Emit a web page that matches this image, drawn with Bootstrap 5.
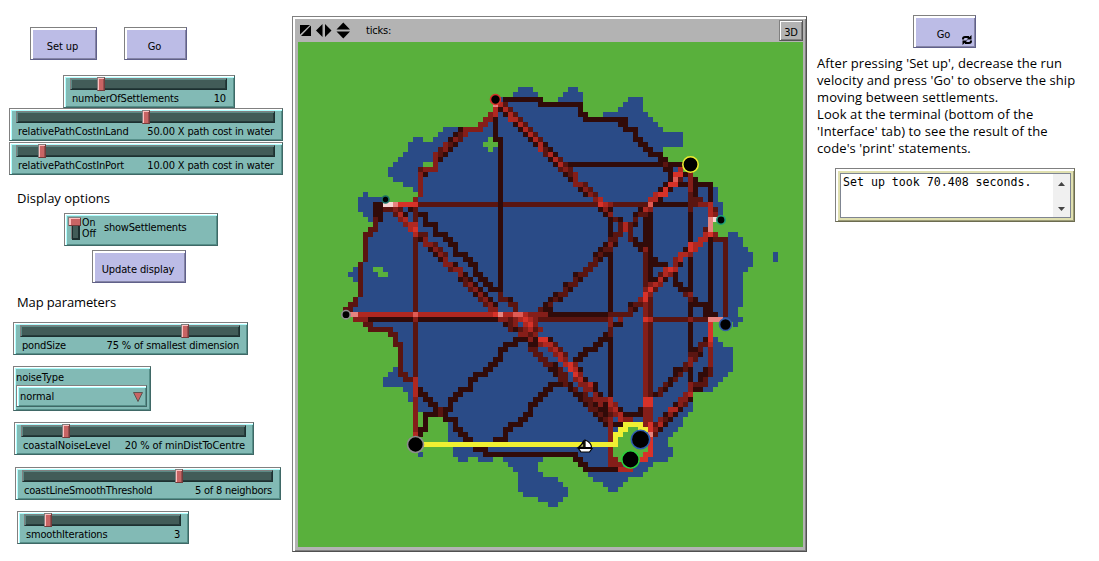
<!DOCTYPE html>
<html lang="en">
<head>
<meta charset="utf-8">
<title>Ship routes between settlements</title>
<link href="https://cdn.jsdelivr.net/npm/bootstrap@5.3.0/dist/css/bootstrap.min.css" rel="stylesheet">
<style>
body{width:1099px;height:561px;overflow:hidden;background:#fff;color:#000;font:11px/13px "DejaVu Sans Condensed","DejaVu Sans",sans-serif;font-stretch:condensed}
.left-pane{width:292px;padding-top:27px}
.right-pane{width:292px;padding:15px 0 0 10px}
.nl-btn,.nl-box{border:1px solid;border-color:#808080 #60608a #60608a #808080;height:33px}
.nl-btn{background:#bcbce6;border-radius:0;padding:5px 2px 0 0;font:inherit;color:#000;letter-spacing:-.1px;box-shadow:inset 2px 2px #fff,inset -1px -1px #8585a6}
.nl-box{background:#82bab5;border-color:#808080 #3f6866 #3f6866 #808080;box-shadow:inset 1px 1px #fff,inset 2px 2px #b0ffff,inset -1px -1px #568f89}
.nl-slider{padding:2px 7px 0 6px}
.groove{height:12px;background:#425c58;border:1px solid;border-color:#808080 #1d3030 #1d3030 #808080;box-shadow:inset 1px 1px #5c8a85,inset -1px -1px #263c3b}
.thumb{top:-2px;width:8px;height:14px;background:#c86464;border:1px solid;border-color:#808080 #733b3b #733b3b #808080;box-shadow:inset 1px 1px #ffc0bf,inset -1px 0 #945050}
.nl-caption{padding:2px 1px 0 2px;letter-spacing:-.17px;white-space:nowrap}
.run-row{padding-left:30px;gap:27px}
.w-setup{width:67px}
.w-go{width:63px}
.w-forever{width:63px;margin-left:96px}
.w-update{width:94px;margin:4px 0 0 92px}
.s-count{width:172px;margin:15px 0 0 63px}
.s-land{width:274px;margin-left:9px}
.s-port{width:274px;margin:1px 0 0 9px}
.s-pond{width:235px;margin:11px 0 0 13px}
.s-coastal{width:240px;margin:11px 0 0 14px}
.s-coastal .nl-caption{letter-spacing:-.09px}
.s-smooth{width:266px;margin:12px 0 0 15px}
.s-smooth .nl-caption{letter-spacing:-.24px}
.s-iter{width:172px;margin:11px 0 0 17px}
.switch-box{width:154px;margin:6px 0 0 64px;padding:3px 0 0 3px}
.on-off{line-height:11px;font-size:10.500px}
.switch-name{margin:4px 0 0 8px;letter-spacing:-.2px}
.chooser{width:138px;height:45px;margin:11px 0 0 13px;padding:4px 3px 3px 2px;letter-spacing:-.1px}
.chooser-value{height:22px;margin-top:1px;padding:1px 3px 0 3px}
.note{font:13px/17px "Open Sans","Noto Sans",sans-serif;white-space:nowrap;margin-left:17px}
.n-display{margin-top:15px}
.n-map{margin-top:11px;letter-spacing:-.12px}
.n-help{margin:7px 0 0;letter-spacing:.09px}
.world{width:515px;height:536px;margin-top:16px;border:1px solid #808080;border-right-color:#505050;border-bottom-color:#505050;background:#b3b3b3;padding:2px 3px 3px 5px;box-shadow:inset 2px 2px #fff,inset -1px -1px #808080}
.world-bar{height:23px}
.ticks{margin:5px 0 0 16px;letter-spacing:-.2px}
.btn-3d{width:24px;height:21px;padding-top:5px;border:1px solid;border-color:#808080 #555 #555 #808080;background:#b3b3b3;box-shadow:inset 1px 1px #fff,inset -1px -1px #808080;margin-top:1px;letter-spacing:-.2px}
.output{width:240px;height:54px;margin:11px 0 0 18px;border:1px solid;border-color:#808080 #6c6c50 #6c6c50 #808080;background:#e0e0b0;padding:4px 3px 3px 4px;box-shadow:inset 2px 2px #fff,inset -1px -1px #9c9c78}
.output-text{background:#fff;border:1px solid #7f8591;height:45px;font:11.600px/14px "DejaVu Sans Mono",monospace;padding:1px 0 0 2px}
.scroller{width:17px;background:#f0f0f0;margin-top:-1px;padding:8px 0 5px}
.forever{right:3px;bottom:2px}
</style>
</head>
<body>
<main class="d-flex">
<section class="left-pane flex-shrink-0">
  <div class="run-row d-flex">
    <button class="nl-btn w-setup">Set up</button>
    <button class="nl-btn w-go">Go</button>
  </div>
  <div class="nl-box nl-slider s-count"><div class="groove position-relative"><div class="thumb position-absolute" style="left:26px"></div></div><div class="nl-caption d-flex justify-content-between"><span>numberOfSettlements</span><span>10</span></div></div>
  <div class="nl-box nl-slider s-land"><div class="groove position-relative"><div class="thumb position-absolute" style="left:125px"></div></div><div class="nl-caption d-flex justify-content-between"><span>relativePathCostInLand</span><span>50.00 X path cost in water</span></div></div>
  <div class="nl-box nl-slider s-port"><div class="groove position-relative"><div class="thumb position-absolute" style="left:21px"></div></div><div class="nl-caption d-flex justify-content-between"><span>relativePathCostInPort</span><span>10.00 X path cost in water</span></div></div>
  <div class="note n-display">Display options</div>
  <div class="nl-box switch-box d-flex">
    <svg width="14" height="24" viewBox="0 0 14 24" shape-rendering="crispEdges"><path fill="#808080" d="M3 8h8v14H3z"/><path fill="#1d3030" d="M4 8h8v15H4z"/><path fill="#425c58" d="M5 8h5v13H5z"/><path fill="#808080" d="M0 0h13v9H0z"/><path fill="#733b3b" d="M1 1h12v8H1z"/><path fill="#ffc0bf" d="M1 1h11v7H1z"/><path fill="#c86464" d="M3 2h9v6H3z"/></svg>
    <div class="on-off"><div>On</div><div>Off</div></div><div class="switch-name">showSettlements</div>
  </div>
  <button class="nl-btn w-update d-block">Update display</button>
  <div class="note n-map">Map parameters</div>
  <div class="nl-box nl-slider s-pond"><div class="groove position-relative"><div class="thumb position-absolute" style="left:160px"></div></div><div class="nl-caption d-flex justify-content-between"><span>pondSize</span><span>75 % of smallest dimension</span></div></div>
  <div class="nl-box chooser">
    <div>noiseType</div>
    <div class="nl-box chooser-value d-flex justify-content-between align-items-center"><span>normal</span><svg width="10" height="10"><path d="M.5 .5h9l-4.500 9z" fill="#c86464" stroke="#5d5450"/></svg></div>
  </div>
  <div class="nl-box nl-slider s-coastal"><div class="groove position-relative"><div class="thumb position-absolute" style="left:40px"></div></div><div class="nl-caption d-flex justify-content-between"><span>coastalNoiseLevel</span><span>20 % of minDistToCentre</span></div></div>
  <div class="nl-box nl-slider s-smooth"><div class="groove position-relative"><div class="thumb position-absolute" style="left:152px"></div></div><div class="nl-caption d-flex justify-content-between"><span>coastLineSmoothThreshold</span><span>5 of 8 neighbors</span></div></div>
  <div class="nl-box nl-slider s-iter"><div class="groove position-relative"><div class="thumb position-absolute" style="left:19px"></div></div><div class="nl-caption d-flex justify-content-between"><span>smoothIterations</span><span>3</span></div></div>
</section>

<section class="world flex-shrink-0">
  <div class="world-bar d-flex">
    <svg width="52" height="23"><path d="M2 6h10l-10 9.500zM13 6.500v10.500H3zM24.500 5v13l-6.500-6.500zM27 5v13l6.500-6.500zM38.500 10.500h13.500l-6.700-7zM38.500 12.500h13.500l-6.700 7z"/></svg>
    <div class="ticks">ticks:</div>
    <div class="btn-3d ms-auto text-center">3D</div>
  </div>
  <svg class="d-block" width="505" height="505" viewBox="0 0 101 101">
    <rect width="101" height="101" fill="#59b03c"/>
    <g id="patches" shape-rendering="crispEdges"></g>
    <g transform="translate(-59.600 -8.400) scale(.2)" stroke-width="1.600">
      <circle cx="495.500" cy="99.500" r="5" stroke="#d73229"/><circle cx="690.500" cy="164.500" r="7.700" stroke="#eded31"/><circle cx="385.500" cy="199.500" r="3.500" stroke="#1d6f65"/><circle cx="346" cy="314.700" r="4.200" stroke="#8d8d8d"/><circle cx="721" cy="220" r="4.200" stroke="#1d9f78"/><circle cx="725.500" cy="324.500" r="6" stroke="#345da9"/><circle cx="415.500" cy="444.500" r="8" stroke="#8d8d8d"/><circle cx="640.500" cy="439.500" r="9.200" stroke="#2d5db0"/><circle cx="630.500" cy="459.500" r="8.700" stroke="#2cd13b"/>
      <path d="M584 440.500c-1 3-3 5-5.500 7h5.500z" fill="#b4b46a" stroke="#000"/><path d="M585 440c4 1.500 6.500 4 6.500 7.500H585z" fill="#fff" stroke="#000" stroke-width="1.200"/><path d="M578.500 448.500h13.500l-2.500 3.500h-8.500z" fill="#fff" stroke="#000" stroke-width="1.200"/>
    </g>
  </svg>
</section>

<section class="right-pane flex-shrink-0">
  <button class="nl-btn w-forever d-block position-relative">Go
    <svg class="forever position-absolute" width="10" height="10" viewBox="0 0 10 10"><path d="M1 4.500V4Q1 2 3 2h4M9 5.500V6q0 2-2 2H3" fill="none" stroke="#000" stroke-width="2"/><path d="M4.500 4.500H9.500V0zM5.500 5.500H.5V10z"/></svg>
  </button>
  <div class="note n-help">After pressing 'Set up', decrease the run<br>velocity and press 'Go' to observe the ship<br>moving between settlements.<br>Look at the terminal (bottom of the<br>'Interface' tab) to see the result of the<br>code's 'print' statements.</div>
  <div class="output"><div class="output-text d-flex justify-content-between"><span>Set up took 70.408 seconds.</span><div class="scroller d-flex flex-column justify-content-between align-items-center"><svg width="8" height="5"><path d="M0 4h7L3.500 0z" fill="#444"/></svg><svg width="8" height="5"><path d="M0 0h7L3.500 4z" fill="#444"/></svg></div></div></div>
</section>
</main>
<script src="https://cdn.jsdelivr.net/npm/bootstrap@5.3.0/dist/js/bootstrap.bundle.min.js"></script>
<script>
// Water, one entry per patch row: "row:from-to,from-to" (end exclusive).
const water = `9:44-47,54-56 10:43-48,53-57 11:40-49,52-57,66-69 12:39-57,65-69 13:39-57,64-69 14:39-58,61-70 15:38-71 16:37-72 17:29-73
18:28-77 19:23-25,27-38,39-77 20:22-37,40-77 21:22-38,39-73 22:21-73 23:20-74 24:19-25,27-77 25:18-77 26:18-79 27:19-80 28:21-83 29:23-84 30:13-14,24-84 31:12-17,23-84
32:12-85 33:12-85 34:13-85 35:14-83 36:15-83 37:14-83 38:13-84,86-88 39:13-89 40:13-89 41:13-90 42:13-91,95-96 43:13-91,95-96 44:12-91 45:11-15,17-90 46:10-16,18-89 47:11-89
48:12-89 49:12-89 50:12-89 51:11-89 52:10-89 53:9-88 54:10-88 55:11-89 56:13-83,87-88 57:14-83 58:18-83 59:19-84 60:19-85 61:20-87 62:20-87 63:20-87 64:20-87 65:19-87 66:18-86
67:17-85 68:17-84 69:21-83 70:22-79 71:22-79 72:23-79 73:23-79 74:25-78 75:30-77 76:30-77 77:30-66,70-76 78:30-65,70-75 79:30-64,70-74 80:31-64,70-74 81:31-63,70-75 82:24-25,31-63,70-75
83:32-34,36-39,41-49,55-64,69-74 84:42-48,56-71 85:43-48,57-70 86:44-49,58-69 87:44-52,59-66 88:44-53,61-65 89:44-54,62-64 90:45-54 91:48-53 92:50-52`;
// Long straight sailing legs: shade,x,y,width,height.
const legs = `b24,32,36,1 a54,24,23,1 b62,32,8,1 a71,32,11,1 a39,15,1,4 a39,19,2,1 a40,20,1,30 b40,50,1,2 b23,39,1,28 d12,54,28,1 a14,55,26,1 a50,54,12,1 b47,55,15,1 a62,34,1,37 b71,55,11,1
a69,33,2,8 b69,41,1,9 a70,41,1,7 c69,50,1,22 b70,50,1,21 c78,26,1,4 b78,30,1,3 a78,33,1,30 a82,28,1,4 g82,35,1,3 a82,39,1,16 e82,56,1,4 d82,60,1,1 c82,61,1,5 b85,39,1,16 b83,39,2,1
c24,26,1,5 a15,32,2,4 b13,39,1,5 b12,44,1,7 b20,60,1,7 a41,11,8,1 a48,12,9,1 a37,82,19,1 a57,85,7,1 c62,75,1,10 y25,80,39,1 e69,71,2,2 c69,73,2,4 d23,67,1,4 c23,71,1,7 d23,78,1,1 e70,79,1,4`;
// Winding legs: "row:" then shade and the columns it covers, e.g. a22 or a22-25 (end inclusive).
const steps = `12:g39,d40,b41 13:a56,d39,a40,d41,b42 14:a56-57,c38,d39,a41,d42,b43 15:a57-65,c37-38,a39,d42-43,b44 16:a64-65,c36-37,a43,d44,b45 17:a65-67,a32,c33-36,a44,d45,b46 18:a67,a31,b32,c33,a45,d46,b47
19:a67-68,a30,c31,b32,a46,d47,b48 20:a68-69,c29,b30,a31,a47,d48,a49 21:a69-70,b28,c29,a30,d48,b49,a50 22:a70-72,c27,b28,a29,b49,d50,a51 23:a72-73,c27,a28,a50,d51,b52 24:b73,c27,a51,d52,b53
25:a73-74,d76,b24,c25-27,b52,c53,b54 26:a74,e75-76,a77,a25,a53,b54,c55 27:a74,f75,b76,a79,a54,c55 28:a73,e74-75,a76-77,c78,a79-81,c55-56,b57 29:a72,e73,a74,a79,a56,c57,b58 30:d71,e72-73,a79,a57,c58,b59
31:d70-71,a72,b79-80,c59,d60,c23 32:h17-18,g19,e20-23,e60,d61,c62,b69,f70,b79,c80-81,d82 33:b17,b18,c19,b20,a22,b23,a60,c61,a62,a68,d69,c70,b78,d82,b83 34:b19,d20,a21,b23,a24-25,a61,c62,a67,b68-69,d82,c83
35:b15,c20,d21,b23,a25,a62,b63,a64,b67,h83 36:b15,c21,d22-23,a25-27,b64,d65,b66,a67 37:b14-15,d22,e23,a27,b64,d65,b66,b81 38:b13-14,d23,b24-25,a27-29,b63-64,b66,d81,e82,c83 39:a24,c25,a29-30,b62-63,b66,a67,d80-81
40:c25-26,b27,a30-31,a61,c62,a63,a67-68,e78,d79-80 41:a26,c27,b28,a31,a60,b61-62,a68,c69,a77,e78,d79 42:a27,c28,b29,a31-33,a59,b60,a61,d76-77,c78 43:a28,c29,a33-34,b59,a60,a71,c75,d76
44:b12,c29-30,a31,a34-35,b58-59,a70-73,c75,a76 45:b30,c31-32,a35,b57-58,a70,d73,e74,d75 46:c32,a33,a35-36,a55,b56-57,a70,b72,d73,c74,a75 47:a32,b33,a34,a36-37,b55,a56,a70-71,d72,a73,a75
48:b33,c34,a35,a37-38,a53,b54-55,c70,d71,c72,a75-76 49:b34,c35,a36,a38-39,b53,a54,c69,e70,b71,a76-77 50:a35,c36,a37,a51,b52-53,e69,c70,b77,c78 51:b11,b36,c37,a38,b40-41,a42,a50,b51,a52,c68,e69,b70,b78,a79
52:b10-11,b37,c38,a39,b42-43,a49,b50,a66,b67-68,a79-82 53:b9-10,c38-39,b43,b48,a49-50,b66,a67,a81-82 54:g10-11,f23,e39,g40,d41-42,f43-44,d45,c46-49,b62-66,a81-83,c69
55:c11-13,c23,c40-41,b42,c43,d44,e45,d46,c47,c62,c64,e69,d70,c78,g82-84 56:b13-14,a41,b42,c43,d45,e46,c47,c62,a63-64 57:b14-18,b42,a43,b44,c45,d46,b47,c48,b62 58:b18-19,c44-45,b46,c47,a61,b62
59:b19,a43-44,a45,c46,a47,e48-49,a50,a60-61,a81 60:b19,a41-43,a46-47,c48,d49-50,b51,a59-60,b80-81 61:a40-41,b46-47,c50,d51,b52,a57-59,a79,b80 62:a40,b47-48,c51,d52,b53,a56-57,b78-79,a80
63:a39-40,b48-49,d52,c53,a55-56,c78,b79 64:a38-39,b49-50,a51,d53,e54,c55,b77,c78 65:a37-38,a50-51,b52,e54,d55,a56,a75,a76,b77,a78,a81,b82 66:b20-21,a35-37,a51,b52-53,e55,c56,a75,b76,a78,a80-81,b82
67:b21-22,a34-35,b52-53,c55,d56,a57,a74,b75,a78,a80,b81 68:a34,a50-52,b53,a54,c56-57,d58,a59,b73,a74,c78,b79-81 69:a24,a32-34,a49-50,a54,b55,c57-58,a59,b72,a73,c78,a79-80 70:a24-25,a31-32,a48-49,a55-56,b57,c59,a60,a71,b72,c77,d78
71:a25-26,a30-31,a47-48,a56,b57,b58,c59-61,d62,c76-77,a78 72:a26-27,a30,a46-47,a57,b58,a59,c60,a61,d62,c63,a75,c76,b77 73:a27,b28,a29-30,a46,b58-59,a60-61,c62,d63,a64,d74-75,a76,a68 74:a25-27,b28,a29,a45-46,a59,b60,a61,b62,c63,d64,a65-68,a73,c74,a75
75:a25,a29-31,a44-45,a60,b61,d64,c65-66,c72,b73,a74 76:a25,a31,a42-44,a61,c62,a63-64,y65-68,e70,b71,d72,a73 77:a24-25,a31-32,a41-42,y64-65,y68-69,e70,c71,a72 78:a24,a32-33,a41,y63-64,g70,b71 79:a33-34,a39-41,y63 80:y62-63
81:a35-37 82:e69-70 83:a55-56,c63,e68-69 84:a56-57,c63-64 85:d64-66`;
const shades = {a:'#310b09',b:'#5a1511',c:'#851e19',d:'#b02821',e:'#d73229',f:'#df5b54',g:'#e7847f',h:'#f7d6d4',y:'#f0f032',w:'#2a4b87'};
const layer = document.getElementById('patches');
function paint(shade, x, y, w, h) {
  const r = document.createElementNS('http://www.w3.org/2000/svg', 'rect');
  r.setAttribute('x', x); r.setAttribute('y', y);
  r.setAttribute('width', w); r.setAttribute('height', h);
  r.setAttribute('fill', shades[shade]);
  layer.append(r);
}
for (const row of water.split(/\s+/)) {
  const [y, runs] = row.split(':');
  for (const run of runs.split(',')) { const [a, b] = run.split('-').map(Number); paint('w', a, +y, b - a, 1); }
}
for (const leg of legs.split(/\s+/)) paint(leg[0], ...leg.slice(1).split(',').map(Number));
for (const row of steps.split(/\s+/)) {
  const [y, runs] = row.split(':');
  for (const run of runs.split(',')) { const [a, b = a] = run.slice(1).split('-').map(Number); paint(run[0], a, +y, b - a + 1, 1); }
}
</script>
</body>
</html>
